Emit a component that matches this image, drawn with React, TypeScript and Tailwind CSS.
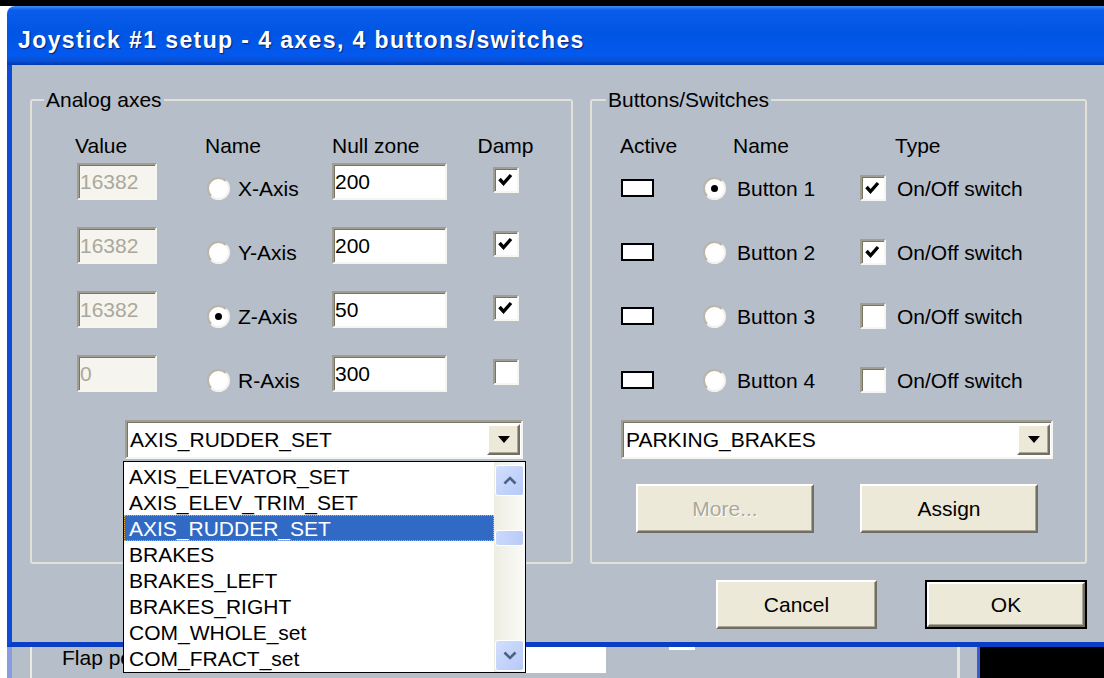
import React from 'react';

type Axis = {
  value: string;
  name: string;
  nullZone: string;
  damp: boolean;
  selected?: boolean;
};

const AXES: Axis[] = [
  { value: '16382', name: 'X-Axis', nullZone: '200', damp: true },
  { value: '16382', name: 'Y-Axis', nullZone: '200', damp: true },
  { value: '16382', name: 'Z-Axis', nullZone: '50', damp: true, selected: true },
  { value: '0', name: 'R-Axis', nullZone: '300', damp: false },
];

const SWITCHES = [
  { name: 'Button 1', selected: true, onOff: true },
  { name: 'Button 2', selected: false, onOff: true },
  { name: 'Button 3', selected: false, onOff: false },
  { name: 'Button 4', selected: false, onOff: false },
];

const EVENTS = [
  'AXIS_ELEVATOR_SET',
  'AXIS_ELEV_TRIM_SET',
  'AXIS_RUDDER_SET',
  'BRAKES',
  'BRAKES_LEFT',
  'BRAKES_RIGHT',
  'COM_WHOLE_set',
  'COM_FRACT_set',
];

// classic 3D edges
const sunken =
  'border-2 border-t-[#a19e8f] border-l-[#a19e8f] border-b-[#f6f5ef] border-r-[#f6f5ef] shadow-[inset_1px_1px_0_#77756a]';
const raised =
  'bg-[#ece9d8] border-2 border-t-white border-l-white border-b-[#716f64] border-r-[#716f64] shadow-[inset_-1px_-1px_0_#aca899]';

function Radio({ checked }: { checked?: boolean }) {
  return (
    <div className="w-[23px] h-[23px] shrink-0 rounded-full bg-white border-2 border-t-[#b9b6a8] border-l-[#b9b6a8] border-b-[#f3f2ec] border-r-[#f3f2ec] flex items-center justify-center">
      {checked && <div className="w-[7px] h-[7px] rounded-full bg-black" />}
    </div>
  );
}

function CheckBox({ checked }: { checked?: boolean }) {
  return (
    <div className={`w-[26px] h-[26px] shrink-0 bg-white ${sunken} flex items-center justify-center`}>
      {checked && (
        <svg width="20" height="20" viewBox="0 0 20 20">
          <polyline points="3.5,9 7.5,13.5 15,5" fill="none" stroke="#000" strokeWidth="3.4" />
        </svg>
      )}
    </div>
  );
}

function Field({ value, disabled, className }: { value: string; disabled?: boolean; className: string }) {
  return (
    <div
      className={`${sunken} ${className} h-[37px] flex items-center pl-[1px] leading-none ${
        disabled ? 'bg-[#f5f4ef] text-[#aca899]' : 'bg-white text-black'
      }`}
    >
      {value}
    </div>
  );
}

function Combo({ value, className }: { value: string; className: string }) {
  return (
    <div className={`${sunken} ${className} h-[39px] bg-white flex items-center`}>
      <span className="flex-1 pl-[3px] leading-none">{value}</span>
      <div className={`${raised} w-[33px] h-[31px] mr-[1px] flex items-center justify-center`}>
        <svg width="12" height="7" viewBox="0 0 12 7">
          <polygon points="0,0 12,0 6,7" fill="#000" />
        </svg>
      </div>
    </div>
  );
}

function PushButton({ label, disabled, className }: { label: string; disabled?: boolean; className: string }) {
  return (
    <div
      className={`${raised} ${className} h-[49px] flex items-center justify-center ${
        disabled ? 'text-[#aca899] [text-shadow:1px_1px_0_#fff]' : 'text-black'
      }`}
    >
      {label}
    </div>
  );
}

function ScrollButton({ up }: { up?: boolean }) {
  return (
    <div className="h-[31px] mx-[1px] rounded-[3px] border border-white bg-gradient-to-br from-[#d2defd] to-[#b6c9f7] flex items-center justify-center">
      <svg width="14" height="9" viewBox="0 0 14 9">
        <polyline
          points={up ? '1.5,7.5 7,2 12.5,7.5' : '1.5,1.5 7,7 12.5,1.5'}
          fill="none"
          stroke="#4d6185"
          strokeWidth="2.6"
        />
      </svg>
    </div>
  );
}

function EventList() {
  return (
    <div className="absolute left-[123px] top-[461px] w-[403px] h-[212px] z-10 bg-white border border-black flex">
      <div className="flex-1 pt-[1px]">
        {EVENTS.map((ev) => (
          <div
            key={ev}
            className={`h-[26px] flex items-center pl-[5px] leading-none ${
              ev === 'AXIS_RUDDER_SET'
                ? 'bg-[#316ac5] text-white outline-1 outline-dotted outline-[#e8b04a] -outline-offset-1'
                : 'text-black'
            }`}
          >
            {ev}
          </div>
        ))}
      </div>
      <div className="w-[31px] bg-gradient-to-r from-[#eeede4] to-[#fbfbf7] flex flex-col pt-[3px] pb-[1px]">
        <ScrollButton up />
        <div className="h-[34px]" />
        <div className="h-[16px] mx-[1px] rounded-[3px] border border-white bg-gradient-to-r from-[#c9d8fc] to-[#b9cbf6]" />
        <div className="flex-1" />
        <ScrollButton />
      </div>
    </div>
  );
}

function AnalogAxes() {
  return (
    <fieldset className="w-[543px] h-[476px] border-2 border-[#e3e1d7] rounded-[3px]">
      <legend className="ml-[12px] px-[2px] leading-[24px]">Analog axes</legend>
      <div className="pl-[45px] pt-[22px]">
        <div className="grid grid-cols-[130px_125px_131px_85px] h-[24px] leading-[24px]">
          <span className="-ml-[2px]">Value</span>
          <span className="-ml-[2px]">Name</span>
          <span>Null zone</span>
          <span className="text-center">Damp</span>
        </div>
        <div className="mt-[5px] flex flex-col gap-[27px]">
          {AXES.map((a) => (
            <div key={a.name} className="grid grid-cols-[130px_125px_131px_85px] h-[37px] items-start">
              <Field value={a.value} disabled className="w-[80px]" />
              <div className="mt-[13px] h-[24px] flex items-center gap-[8px]">
                <Radio checked={a.selected} />
                <span className="leading-none">{a.name}</span>
              </div>
              <Field value={a.nullZone} className="w-[115px]" />
              <div className="flex justify-center pt-[4px]">
                <CheckBox checked={a.damp} />
              </div>
            </div>
          ))}
        </div>
        <Combo value="AXIS_RUDDER_SET" className="mt-[28px] ml-[48px] w-[398px]" />
      </div>
    </fieldset>
  );
}

function ButtonsSwitches() {
  return (
    <fieldset className="w-[497px] h-[476px] border-2 border-[#e3e1d7] rounded-[3px]">
      <legend className="ml-[14px] px-[2px] leading-[24px]">Buttons/Switches</legend>
      <div className="pl-[29px] pt-[22px]">
        <div className="grid grid-cols-[82px_157px_1fr] h-[24px] leading-[24px]">
          <span className="-ml-[1px]">Active</span>
          <span className="pl-[30px]">Name</span>
          <span className="pl-[35px]">Type</span>
        </div>
        <div className="mt-[11px] flex flex-col gap-[26px]">
          {SWITCHES.map((s) => (
            <div key={s.name} className="grid grid-cols-[82px_157px_1fr] h-[38px] items-center">
              <div className="w-[33px] h-[18px] bg-white border-2 border-black" />
              <div className="flex items-center gap-[11px]">
                <Radio checked={s.selected} />
                <span className="leading-none">{s.name}</span>
              </div>
              <div className="flex items-center gap-[11px]">
                <CheckBox checked={s.onOff} />
                <span className="leading-none">On/Off switch</span>
              </div>
            </div>
          ))}
        </div>
        <Combo value="PARKING_BRAKES" className="mt-[21px] w-[432px]" />
        <div className="mt-[25px] ml-[15px] flex gap-[46px]">
          <PushButton label="More..." disabled className="w-[178px]" />
          <PushButton label="Assign" className="w-[178px]" />
        </div>
      </div>
    </fieldset>
  );
}

export default function App() {
  return (
    <div className="relative w-[1104px] h-[678px] overflow-hidden bg-white flex flex-col font-['Liberation_Sans',Arial,sans-serif] text-[21px] text-black">
      <div className="h-[6px] bg-black shrink-0" />

      {/* dialog window */}
      <div className="ml-[7px] h-[641px] flex flex-col">
        <div className="h-[59px] shrink-0 rounded-tl-[8px] bg-[linear-gradient(180deg,#3d8ff6_0%,#0a5de9_7%,#0055e4_45%,#0359ee_82%,#0650d8_93%,#0039ae_100%)] flex items-center pl-[11px] pt-[9px]">
          <span className="text-white font-bold text-[23px] tracking-[1.4px] leading-none [text-shadow:1px_1px_1px_#0b2278]">
            Joystick #1 setup - 4 axes, 4 buttons/switches
          </span>
        </div>
        <div className="flex-1 bg-[#b5bec9] border-l-[5px] border-l-[#0c4bd8] border-b-[5px] border-b-[#0a3ec5] pl-[18px] pt-[23px]">
          <div className="w-[1057px]">
            <div className="flex gap-[17px]">
              <AnalogAxes />
              <ButtonsSwitches />
            </div>
            <div className="mt-[16px] flex justify-end gap-[48px]">
              <PushButton label="Cancel" className="w-[161px]" />
              <div className="w-[162px] h-[49px] border-2 border-black">
                <PushButton label="OK" className="w-full !h-full" />
              </div>
            </div>
          </div>
        </div>
      </div>

      {/* window behind the dialog, partly hidden by the open list */}
      <div className="flex-1 flex bg-[#b5bec9]">
        <div className="w-[7px] bg-white" />
        <div className="w-[5px] bg-[#8a9ce0]" />
        <div className="w-[18px]" />
        <div className="w-[2px] bg-[#ecebe3]" />
        <div className="w-[30px]" />
        <div className="w-[61px] overflow-hidden whitespace-nowrap leading-[22px]">Flap po</div>
        <div className="w-[179px]" />
        <div className="w-[304px] h-[26px] bg-white" />
        <div className="w-[63px]" />
        <div className="w-[26px] h-[3px] bg-white" />
        <div className="w-[262px]" />
        <div className="w-[3px] bg-[#e6e6e2]" />
        <div className="w-[17px]" />
        <div className="w-[3px] bg-[#3a5bd8]" />
        <div className="flex-1 bg-black" />
      </div>

      <EventList />
    </div>
  );
}
